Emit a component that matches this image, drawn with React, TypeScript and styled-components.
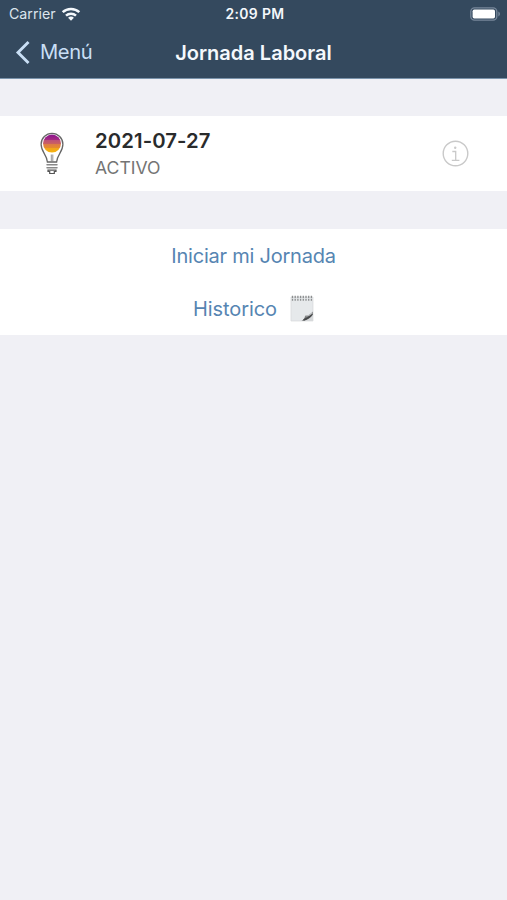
import React from "react";
import styled, { createGlobalStyle } from "styled-components";

const GlobalStyle = createGlobalStyle`
  * { box-sizing: border-box; }
  body { margin: 0; background: #f0f0f5; font-family: Inter, "Liberation Sans", sans-serif; }
`;

const Screen = styled.main`
  width: 100%;
  max-width: 507px;
  min-height: 900px;
  background: #f0f0f5;
`;

const Header = styled.header`
  height: 79px;
  background: #34495e;
  border-bottom: 1px solid #7a93ab;
  color: #f4f8fc;
`;

const Bar = styled.div<{ $height: number; $padding: string }>`
  display: grid;
  grid-template-columns: 1fr auto 1fr;
  align-items: center;
  height: ${(p) => p.$height}px;
  padding: ${(p) => p.$padding};
`;

const Side = styled.div<{ $end?: boolean; $gap?: number }>`
  display: flex;
  align-items: center;
  justify-content: ${(p) => (p.$end ? "flex-end" : "flex-start")};
  gap: ${(p) => p.$gap ?? 0}px;
`;

const Label = styled.span<{ $size: number; $weight?: number; $spacing?: number; $color?: string }>`
  font-size: ${(p) => p.$size}px;
  font-weight: ${(p) => p.$weight ?? 400};
  letter-spacing: ${(p) => p.$spacing ?? 0}px;
  color: ${(p) => p.$color ?? "inherit"};
  line-height: 1.3;
  white-space: nowrap;
`;

const BackButton = styled.button`
  display: flex;
  align-items: center;
  gap: 9px;
  padding: 0;
  border: 0;
  background: none;
  color: #c9dff5;
  font-family: inherit;
`;

const Card = styled.section`
  display: flex;
  align-items: center;
  height: 75px;
  margin-top: 37px;
  padding: 0 38px 0 39px;
  background: #fff;
`;

const Details = styled.div`
  display: flex;
  flex: 1;
  flex-direction: column;
  gap: 2px;
  padding-top: 1px;
  margin-left: 30px;
`;

const Actions = styled.section`
  height: 106px;
  margin-top: 38px;
  background: #fff;
`;

const Action = styled.button`
  display: flex;
  align-items: center;
  justify-content: center;
  gap: 13px;
  width: 100%;
  height: 53px;
  padding: 0;
  border: 0;
  background: none;
  color: #5685b2;
  font-family: inherit;
`;

const Wifi = () => (
  <svg width="20" height="14" viewBox="0 0 20 14" fill="none" stroke="#f4f8fc" strokeWidth="2.5">
    <path d="M1.7 5.2C6.2.8 13.8.8 18.3 5.2" />
    <path d="M5 8.6c2.8-2.6 7.2-2.6 10 0" />
    <path d="M7.1 10.7c1.7-1.5 4.1-1.5 5.8 0L10 13.8Z" fill="#f4f8fc" stroke="none" />
  </svg>
);

const Battery = () => (
  <svg width="31" height="14" viewBox="0 0 31 14">
    <rect x=".8" y=".8" width="26" height="12.4" rx="3.7" fill="none" stroke="#77879a" strokeWidth="1.3" />
    <rect x="2.6" y="2.6" width="22.4" height="8.8" rx="1.7" fill="#fff" />
    <path d="M28.3 4.6c2.2.7 2.2 4.1 0 4.8Z" fill="#77879a" />
  </svg>
);

const Chevron = () => (
  <svg width="16" height="25" viewBox="0 0 16 25" fill="none" stroke="#c9dff5" strokeWidth="2.9" strokeLinecap="square">
    <path d="M12.5 3 3 12.5 12.5 22" />
  </svg>
);

const Bulb = () => (
  <svg width="26" height="43" viewBox="0 0 26 43" fill="none">
    <defs>
      <linearGradient id="sunset" x1="0" y1="0" x2="0" y2="1">
        <stop offset="0" stopColor="#8b148d" />
        <stop offset=".3" stopColor="#a62b82" />
        <stop offset=".31" stopColor="#bd5078" />
        <stop offset=".5" stopColor="#ca5f62" />
        <stop offset=".51" stopColor="#dc7b48" />
        <stop offset=".73" stopColor="#e58b2e" />
        <stop offset=".74" stopColor="#f0a41d" />
        <stop offset="1" stopColor="#f6b40c" />
      </linearGradient>
    </defs>
    <path d="M8.4 30C8 22.500 2.100 20.200 2.100 12.200a10.900 10.900 0 0 1 21.800 0c0 8-5.900 10.300-6.300 17.800Z" stroke="#666" strokeWidth="1.300" />
    <circle cx="13" cy="11.600" r="9" fill="url(#sunset)" />
    <path d="M12.300 22.500v7M13.800 22.500v7" stroke="#777" strokeWidth=".8" />
    <path d="M8 32.700h10M8 35.700h10" stroke="#888" strokeWidth="1.500" strokeLinecap="round" />
    <path d="M9 38.100h8v1.400h-1.700v2h-4.600v-2H9Z" stroke="#555" strokeWidth="1.200" />
  </svg>
);

const Info = () => (
  <svg width="27" height="27" viewBox="0 0 27 27" fill="none" stroke="#c9c9c9">
    <circle cx="13.500" cy="13.500" r="12.300" strokeWidth="1.400" />
    <path d="M10.300 11.500h3.400v8.800M9.800 20.300h7.600" strokeWidth="1.300" />
    <circle cx="13.200" cy="7.700" r="1.200" fill="#c9c9c9" stroke="none" />
  </svg>
);

const Notepad = () => (
  <svg width="24" height="27" viewBox="0 0 24 27">
    <path d="M1 2h22v24H1Z" fill="#e6e9eb" stroke="#d5d8da" strokeWidth=".7" />
    <path d="M13 26 23 17.500V26Z" fill="#d6d8da" />
    <path d="M11.500 26c2.300-1.200 3.200-3 3.600-5.300 2.800.2 5.700-1.200 7.900-4.200v2.500c-2 4-6 6.500-11.500 7Z" fill="#77797a" />
    <path d="M13.500 25c3-1 6.500-3 8.700-6" fill="none" stroke="#464849" strokeWidth="1.500" />
    <path d="M15.500 21c2.700 0 5-1.200 7-3.400" fill="none" stroke="#b8bbbd" strokeWidth="1.200" />
    <path d="M2.500.8v5M5.200.8v5M7.900.8v5M10.600.8v5M13.300.8v5M16 .8v5M18.700.8v5M21.400.8v5" stroke="#8d8f90" strokeWidth="1.300" strokeDasharray="2.400 .8" />
  </svg>
);

export default function App() {
  return (
    <Screen>
      <GlobalStyle />
      <Header>
        <Bar $height={27} $padding="1px 6px 0 9px">
          <Side $gap={5}>
            <Label $size={14.2} $color="#dce5ed">Carrier</Label>
            <Wifi />
          </Side>
          <Label $size={13.9} $weight={600} $spacing={0.35}>2:09 PM</Label>
          <Side $end><Battery /></Side>
        </Bar>
        <Bar $height={51} $padding="0 15px">
          <Side>
            <BackButton>
              <Chevron />
              <Label $size={20.2} $spacing={-0.4}>Menú</Label>
            </BackButton>
          </Side>
          <Label $size={20} $weight={600}>Jornada Laboral</Label>
          <Side $end />
        </Bar>
      </Header>
      <Card>
        <Bulb />
        <Details>
          <Label $size={20.3} $weight={600} $spacing={0.1} $color="#292b2c">2021-07-27</Label>
          <Label $size={17.6} $color="#747474">ACTIVO</Label>
        </Details>
        <Info />
      </Card>
      <Actions>
        <Action><Label $size={20} $spacing={-0.23}>Iniciar mi Jornada</Label></Action>
        <Action>
          <Label $size={20} $spacing={-0.1}>Historico</Label>
          <Notepad />
        </Action>
      </Actions>
    </Screen>
  );
}
